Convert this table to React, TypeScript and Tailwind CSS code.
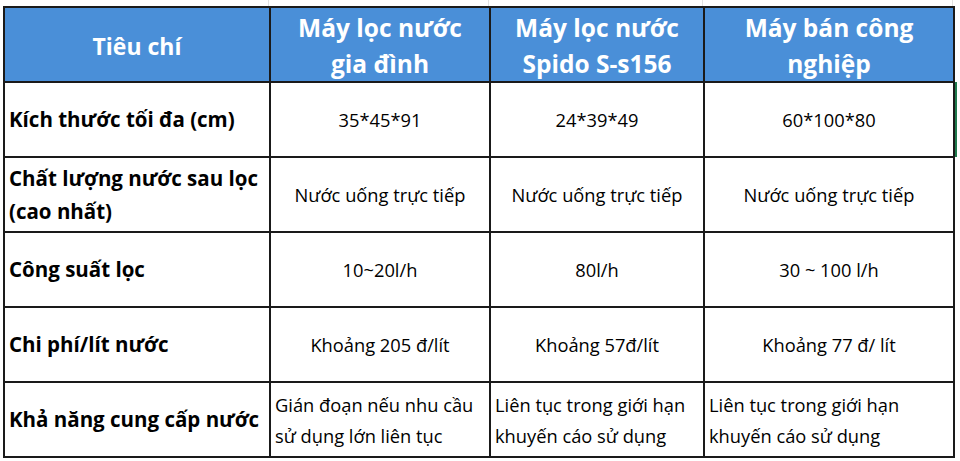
import React from 'react';

type Row = {
  label: string[];
  values: { lines: string[]; align: 'center' | 'left' }[];
};

const headers = [['Máy lọc nước', 'gia đình'], ['Máy lọc nước', 'Spido S-s156'], ['Máy bán công', 'nghiệp']];

const rows: Row[] = [
  {
    label: ['Kích thước tối đa (cm)'],
    values: [
      { lines: ['35*45*91'], align: 'center' },
      { lines: ['24*39*49'], align: 'center' },
      { lines: ['60*100*80'], align: 'center' },
    ],
  },
  {
    label: ['Chất lượng nước sau lọc', '(cao nhất)'],
    values: [
      { lines: ['Nước uống trực tiếp'], align: 'center' },
      { lines: ['Nước uống trực tiếp'], align: 'center' },
      { lines: ['Nước uống trực tiếp'], align: 'center' },
    ],
  },
  {
    label: ['Công suất lọc'],
    values: [
      { lines: ['10~20l/h'], align: 'center' },
      { lines: ['80l/h'], align: 'center' },
      { lines: ['30 ~ 100 l/h'], align: 'center' },
    ],
  },
  {
    label: ['Chi phí/lít nước'],
    values: [
      { lines: ['Khoảng 205 đ/lít'], align: 'center' },
      { lines: ['Khoảng 57đ/lít'], align: 'center' },
      { lines: ['Khoảng 77 đ/ lít'], align: 'center' },
    ],
  },
  {
    label: ['Khả năng cung cấp nước'],
    values: [
      { lines: ['Gián đoạn nếu nhu cầu', 'sử dụng lớn liên tục'], align: 'left' },
      { lines: ['Liên tục trong giới hạn', 'khuyến cáo sử dụng'], align: 'left' },
      { lines: ['Liên tục trong giới hạn', 'khuyến cáo sử dụng'], align: 'left' },
    ],
  },
];

const cols = 'grid grid-cols-[264px_218px_212px_248px]';

export default function App() {
  return (
    <div className="w-[960px] h-[461px] bg-white overflow-hidden font-['Open_Sans','Lato',sans-serif] text-black">
      {/* sheet gridlines above the table */}
      <div className={`${cols} gap-x-[2px] h-[6px] pl-[5px]`}>
        <div className="border-r border-[#e2e2e2]" />
        <div className="border-r border-[#e2e2e2]" />
        <div className="border-r border-[#e2e2e2]" />
        <div className="border-r border-[#e2e2e2]" />
      </div>

      <div className="flex">
        <div className={`${cols} ml-[3px] gap-[2px] bg-[#1a1a1a] border-2 border-[#1a1a1a] w-fit`}>
          <div className="bg-[#4a8fd8] h-[73px] flex items-center justify-center text-white font-bold text-[23px] pt-[4px]">
            Tiêu chí
          </div>
          {headers.map((h, i) => (
            <div
              key={i}
              className="bg-[#4a8fd8] h-[73px] flex flex-col items-center justify-center text-white font-bold text-[24.5px] leading-[36px] pt-[3px]"
            >
              {h.map((l) => (
                <span key={l}>{l}</span>
              ))}
            </div>
          ))}

          {rows.map((r, ri) => (
            <React.Fragment key={ri}>
              <div className="bg-white h-[73px] flex flex-col justify-center pl-[4px] font-bold text-[20.5px] leading-[33px]">
                {r.label.map((l) => (
                  <span key={l}>{l}</span>
                ))}
              </div>
              {r.values.map((v, vi) => (
                <div
                  key={vi}
                  className={`bg-white h-[73px] flex flex-col justify-center text-[18.3px] leading-[31px] ${
                    v.align === 'center' ? 'items-center' : 'items-start pl-[4px]'
                  }`}
                >
                  {v.lines.map((l) => (
                    <span key={l}>{l}</span>
                  ))}
                </div>
              ))}
            </React.Fragment>
          ))}
        </div>

        {/* next sheet column */}
        <div className="flex flex-col w-[5px]">
          <div className="h-[76px]" />
          <div className="h-[75px] border-l-2 border-[#1f7a4d]" />
        </div>
      </div>
    </div>
  );
}
